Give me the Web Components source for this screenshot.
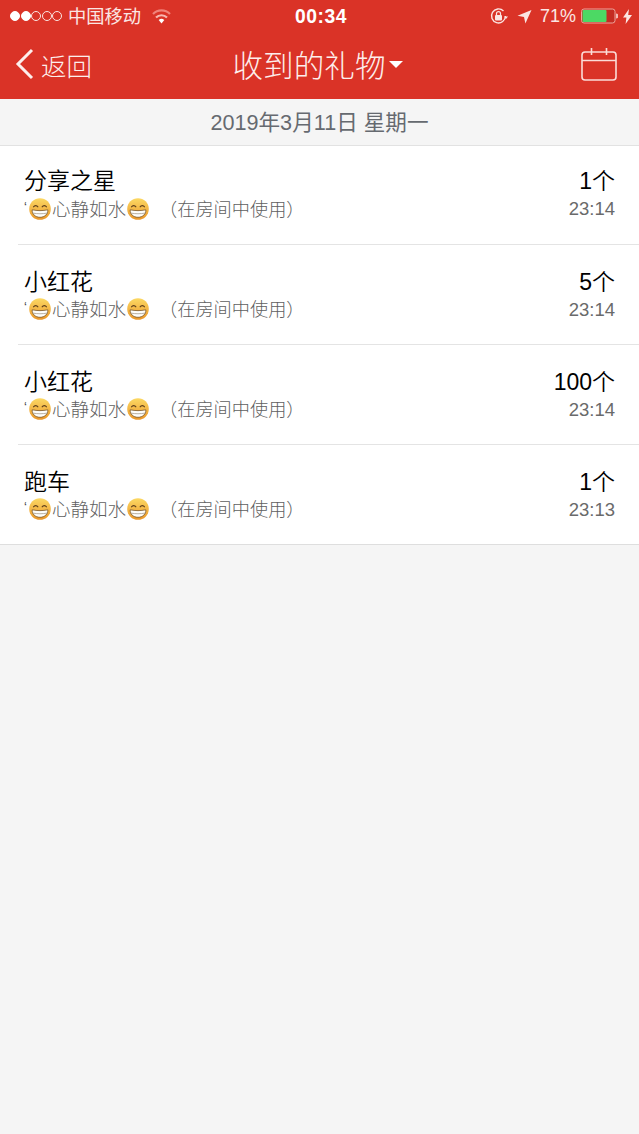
<!DOCTYPE html>
<html lang="zh">
<head>
<meta charset="utf-8">
<title>收到的礼物</title>
<style>
html, body { margin: 0; padding: 0; }
body {
    background: #f5f5f5;
    font-family: "Liberation Sans", "Noto Sans CJK SC", sans-serif;
    width: 639px;
    height: 1134px;
    overflow: hidden;
}
</style>
</head>
<body>
<status-bar></status-bar>
<nav-bar back="返回" heading="收到的礼物"></nav-bar>
<date-bar>2019年3月11日 星期一</date-bar>
<gift-list>
    <gift-row name="分享之星" count="1个" time="23:14"></gift-row>
    <gift-row name="小红花" count="5个" time="23:14"></gift-row>
    <gift-row name="小红花" count="100个" time="23:14"></gift-row>
    <gift-row name="跑车" count="1个" time="23:13" last></gift-row>
</gift-list>

<script>
class StatusBar extends HTMLElement {
    constructor() {
        super();
        this.attachShadow({ mode: 'open' });
    }

    connectedCallback() {
        this.shadowRoot.innerHTML = `
            <style>
                :host {
                    display: grid;
                    grid-template-columns: 1fr auto 1fr;
                    align-items: center;
                    height: 32px;
                    background: #da3327;
                    color: #fbe6e3;
                    font-size: 18px;
                    padding: 0 7px 0 10px;
                    box-sizing: border-box;
                }
                .left, .right { display: flex; align-items: center; }
                .right { justify-content: flex-end; }
                .dots { display: flex; gap: 0.5px; margin-right: 6px; }
                .dot { width: 10px; height: 10px; border-radius: 50%; border: 1px solid #fbe6e3; box-sizing: border-box; }
                .dot.on { background: #fff; border-color: #fff; }
                .carrier { font-size: 18.3px; font-family: "Noto Sans CJK SC", sans-serif; margin-top: -2px; }
                .wifi { margin-left: 11px; }
                .time { font-weight: bold; font-size: 19.3px; letter-spacing: 0.5px; color: #fff; margin-top: 1px; }
                .percent { font-size: 18px; margin-right: 5px; }
                svg { display: block; }
            </style>
            <div class="left">
                <div class="dots">
                    <span class="dot on"></span><span class="dot on"></span>
                    <span class="dot"></span><span class="dot"></span><span class="dot"></span>
                </div>
                <span class="carrier">中国移动</span>
                <svg class="wifi" width="19" height="15" viewBox="0 0 19 15">
                    <path d="M1 5a12 12 0 0 1 17 0" fill="none" stroke="#f0837a" stroke-width="2.2"/>
                    <path d="M4 8.500a7.800 7.800 0 0 1 11 0" fill="none" stroke="#f7b8b1" stroke-width="2.200"/>
                    <path d="M6.700 11a4 4 0 0 1 5.600 0L9.500 14.500z" fill="#fff"/>
                </svg>
            </div>
            <span class="time">00:34</span>
            <div class="right">
                <svg width="20" height="18" viewBox="0 0 20 18" style="margin-right:8px">
                    <path d="M16.500 9a7 7 0 1 1-2-5" fill="none" stroke="#fbe6e3" stroke-width="1.400"/>
                    <path d="M15 9.500h4l-2 2.400z" fill="#fbe6e3"/>
                    <rect x="6" y="8" width="7" height="5.500" rx="1" fill="#fbe6e3"/>
                    <path d="M7.500 8V6.600a2 2 0 0 1 4 0V8" fill="none" stroke="#fbe6e3" stroke-width="1.200"/>
                </svg>
                <svg width="15" height="15" viewBox="0 0 15 15" style="margin-right:8px">
                    <path d="M14.500 1 8.400 14.500 7 8 .5 6.800z" fill="#fbe6e3"/>
                </svg>
                <span class="percent">71%</span>
                <svg width="37" height="16" viewBox="0 0 37 16">
                    <rect x=".5" y="1" width="33.500" height="14" rx="2.500" fill="#c42c22" stroke="#eda59d"/>
                    <rect x="1.500" y="2" width="24" height="12" rx="1" fill="#4cd964"/>
                    <path d="M35 5.500a2.500 2.500 0 0 1 0 5z" fill="#f3bcb6"/>
                </svg>
                <svg width="9" height="15" viewBox="0 0 9 15" style="margin-left:5px">
                    <path d="M6 0 0 8.500h3.400L2.600 15 9 6H5.200z" fill="#fbe6e3"/>
                </svg>
            </div>
        `;
    }
}

class NavBar extends HTMLElement {
    constructor() {
        super();
        this.attachShadow({ mode: 'open' });
    }

    connectedCallback() {
        this.shadowRoot.innerHTML = `
            <style>
                :host {
                    display: grid;
                    grid-template-columns: 1fr auto 1fr;
                    align-items: center;
                    height: 67px;
                    background: #da3327;
                    color: #fdeeec;
                    padding: 0 22px 3px 15px;
                    box-sizing: border-box;
                    font-family: "Noto Sans CJK SC", sans-serif;
                    font-weight: 300;
                }
                .back { display: flex; align-items: center; gap: 7px; font-size: 25.5px; }
                .title { display: flex; align-items: center; font-size: 30.6px; gap: 4px; margin-left: 4px; }
                .caret { width: 0; height: 0; border: 7px solid transparent; border-top: 7px solid #fff; border-bottom: 0; }
                .cal { justify-self: end; display: block; }
                svg { display: block; }
            </style>
            <div class="back">
                <svg width="19" height="32" viewBox="0 0 19 32">
                    <path d="M17 2 3 16l14 14" fill="none" stroke="#fdeeec" stroke-width="3"/>
                </svg>
                <span>${this.getAttribute('back')}</span>
            </div>
            <div class="title"><span>${this.getAttribute('heading')}</span><span class="caret"></span></div>
            <svg class="cal" width="36" height="33" viewBox="0 0 36 33">
                <rect x="1" y="4" width="34" height="28" rx="3" fill="none" stroke="#fbdcd8" stroke-width="1.600"/>
                <path d="M1 12.500h34M10.500 0v7M25.500 0v7" fill="none" stroke="#fbdcd8" stroke-width="1.600"/>
            </svg>
        `;
    }
}

class DateBar extends HTMLElement {
    constructor() {
        super();
        this.attachShadow({ mode: 'open' });
        this.shadowRoot.innerHTML = `
            <style>
                :host {
                    display: flex;
                    justify-content: center;
                    align-items: center;
                    height: 47px;
                    padding-bottom: 3px;
                    box-sizing: border-box;
                    background: #f5f5f5;
                    border-bottom: 1px solid #e2e2e2;
                    color: #666a70;
                    font-size: 21.6px;
                    font-family: "Liberation Sans", "Noto Sans CJK SC", sans-serif;
                }
            </style>
            <slot></slot>
        `;
    }
}

class GiftList extends HTMLElement {
    constructor() {
        super();
        this.attachShadow({ mode: 'open' });
        this.shadowRoot.innerHTML = `
            <style>
                :host {
                    display: block;
                    background: #fff;
                    border-bottom: 1px solid #dedede;
                }
            </style>
            <slot></slot>
        `;
    }
}

const grin = () => `
    <svg class="grin" width="22" height="22" viewBox="0 0 22 22">
        <defs>
            <linearGradient id="face" x1="0" y1="0" x2="0" y2="1">
                <stop offset="0" stop-color="#fcd964"/>
                <stop offset="1" stop-color="#e9962a"/>
            </linearGradient>
        </defs>
        <circle cx="11" cy="11" r="10.800" fill="url(#face)"/>
        <path d="M4.600 8.800a2.400 2.400 0 0 1 4.200 0M13.200 8.800a2.400 2.400 0 0 1 4.200 0" fill="none" stroke="#5e3f1c" stroke-width="1.200" stroke-linecap="round"/>
        <path d="M3.200 11.800c5 1.100 10.600 1.100 15.600 0 .4 4.300-3.200 7.500-7.800 7.500s-8.200-3.200-7.800-7.500z" fill="#fdfdfa" stroke="#7a5526" stroke-width=".8"/>
        <path d="M3.600 15c4.800 1 10 1 14.800 0" fill="none" stroke="#a89c8a" stroke-width=".8"/>
    </svg>`;

class GiftRow extends HTMLElement {
    constructor() {
        super();
        this.attachShadow({ mode: 'open' });
    }

    connectedCallback() {
        this.shadowRoot.innerHTML = `
            <style>
                :host {
                    display: block;
                    padding-left: 18px;
                    font-family: "Liberation Sans", "Noto Sans CJK SC", sans-serif;
                }
                .row {
                    height: 100px;
                    box-sizing: border-box;
                    border-bottom: 1px solid #e4e4e4;
                    padding: 22px 24px 0 6px;
                    display: flex;
                    justify-content: space-between;
                }
                :host(:first-child) .row { height: 99px; padding-top: 20px; }
                :host([last]) .row { border-bottom: 0; height: 99px; }
                .name, .count { font-size: 23px; line-height: 30px; color: #000; font-weight: 350; }
                .sub, .time { display: flex; align-items: center; height: 26px; margin-top: -2px; color: #5f5f5f; font-size: 18.5px; font-weight: 300; }
                :host(:first-child) .sub { margin-top: -1px; }
                .time, :host(:first-child) .time { margin-top: 0; }
                .side { text-align: right; display: flex; flex-direction: column; align-items: flex-end; }
                .quote { font-size: 13px; width: 5px; color: #444; align-self: flex-start; margin-top: 4px; }
                .text { margin: 0 1px; }
                .note { margin-left: 10px; font-size: 18.2px; }
                .grin { margin-top: 2px; }
                .time { color: #6a6a6a; }
                svg { display: block; flex: none; }
            </style>
            <div class="row">
                <div>
                    <div class="name">${this.getAttribute('name')}</div>
                    <div class="sub">
                        <span class="quote">‘</span>${grin()}<span class="text">心静如水</span>${grin()}
                        <span class="note">（在房间中使用）</span>
                    </div>
                </div>
                <div class="side">
                    <div class="count">${this.getAttribute('count')}</div>
                    <div class="time">${this.getAttribute('time')}</div>
                </div>
            </div>
        `;
    }
}

customElements.define('status-bar', StatusBar);
customElements.define('nav-bar', NavBar);
customElements.define('date-bar', DateBar);
customElements.define('gift-list', GiftList);
customElements.define('gift-row', GiftRow);
</script>
</body>
</html>
